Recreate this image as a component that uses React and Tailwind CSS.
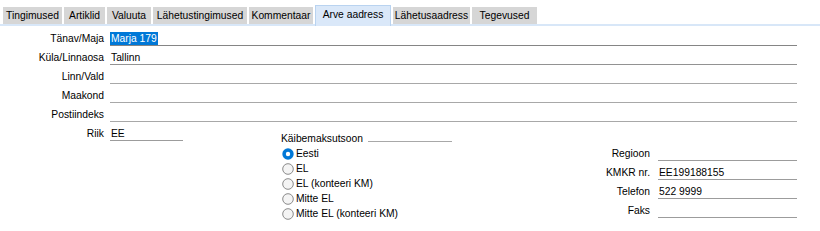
import React from "react";

const tabs = [
  { t: "Tingimused", w: "w-[59px]" },
  { t: "Artiklid", w: "w-[41px]" },
  { t: "Valuuta", w: "w-[44px]" },
  { t: "Lähetustingimused", w: "w-[94px]" },
  { t: "Kommentaar", w: "w-[64px]" },
  { t: "Arve aadress", w: "w-[76px]", active: true },
  { t: "Lähetusaadress", w: "w-[77px]" },
  { t: "Tegevused", w: "w-[65px]" },
];

function Row({ label, children, line = "border-[#9c9c9c]" }) {
  return (
    <div className="flex h-[19px] items-end">
      <div className="w-[104px] h-[14px] leading-[14px] text-right whitespace-nowrap">{label}</div>
      <div className={`ml-[6px] w-[687px] h-[14px] leading-[13px] border-b ${line} whitespace-nowrap`}>
        {children}
      </div>
    </div>
  );
}

function RightRow({ label, children }) {
  return (
    <div className="flex h-[19px] items-end">
      <div className="w-[80px] h-[14px] leading-[14px] text-right whitespace-nowrap">{label}</div>
      <div className="ml-[8px] w-[139px] h-[14px] leading-[13px] border-b border-[#9c9c9c] whitespace-nowrap">
        {children}
      </div>
    </div>
  );
}

function Radio({ checked, label }) {
  return (
    <div className="flex h-[15px] items-center">
      <svg width="12" height="12" viewBox="0 0 12 12" className="ml-[1px] shrink-0">
        {checked ? (
          <>
            <circle cx="6" cy="6" r="5.7" fill="#0078d7" />
            <circle cx="6" cy="6" r="2.2" fill="#ffffff" />
          </>
        ) : (
          <circle cx="6" cy="6" r="5.3" fill="#f4f4f4" stroke="#8a8a8a" strokeWidth="1" />
        )}
      </svg>
      <span className="ml-[2px] leading-[13px] whitespace-nowrap">{label}</span>
    </div>
  );
}

export default function App() {
  return (
    <div className="w-[820px] h-[231px] bg-white text-[10.3px] text-black overflow-hidden font-['Liberation_Sans',Arial,sans-serif]">
      {/* Tabs */}
      <div className="flex items-end h-[26px] pl-[3px] gap-[2px] border-b-2 border-[#d8e7f8]">
        {tabs.map((tab) =>
          tab.active ? (
            <div
              key={tab.t}
              className={`${tab.w} h-[21px] -mb-[2px] pb-[2px] flex items-center justify-center bg-[#dae8f9] border border-b-0 border-[#b9d3f0] whitespace-nowrap`}
            >
              {tab.t}
            </div>
          ) : (
            <div
              key={tab.t}
              className={`${tab.w} h-[17px] flex items-center justify-center bg-[#d6d6d6] whitespace-nowrap`}
            >
              {tab.t}
            </div>
          )
        )}
      </div>

      {/* Address rows */}
      <div className="pt-[1px]">
        <Row label="Tänav/Maja" line="border-[#858585]">
          <span className="inline-block h-[13px] leading-[13px] bg-[#0078d7] text-white pl-[1px] pr-[1px]">Marja 179</span>
        </Row>
        <Row label="Küla/Linnaosa" line="border-[#929292]">
          <span className="pl-[1px]">Tallinn</span>
        </Row>
        <Row label="Linn/Vald" line="border-[#a8a8a8]" />
        <Row label="Maakond" line="border-[#a8a8a8]" />
        <Row label="Postiindeks" line="border-[#a8a8a8]" />

        {/* Bottom section */}
        <div className="flex items-start">
          <div className="flex h-[19px] items-end">
            <div className="w-[104px] h-[14px] leading-[14px] text-right">Riik</div>
            <div className="ml-[6px] w-[73px] h-[14px] leading-[13px] border-b border-[#9c9c9c] pl-[1px]">EE</div>
          </div>

          <div className="ml-[98px] mt-[9px]">
            <div className="flex h-[14px] items-end">
              <span className="leading-[13px] whitespace-nowrap">Käibemaksutsoon</span>
              <div className="ml-[5px] mb-[3px] w-[84px] border-b border-[#a8a8a8]" />
            </div>
            <div className="mt-[1px]">
              <Radio checked label="Eesti" />
              <Radio label="EL" />
              <Radio label="EL (konteeri KM)" />
              <Radio label="Mitte EL" />
              <Radio label="Mitte EL (konteeri KM)" />
            </div>
          </div>

          <div className="ml-auto mr-[23px] mt-[20px]">
            <RightRow label="Regioon" />
            <RightRow label="KMKR nr.">
              <span className="pl-[1px]">EE199188155</span>
            </RightRow>
            <RightRow label="Telefon">
              <span className="pl-[1px]">522 9999</span>
            </RightRow>
            <RightRow label="Faks" />
          </div>
        </div>
      </div>
    </div>
  );
}
